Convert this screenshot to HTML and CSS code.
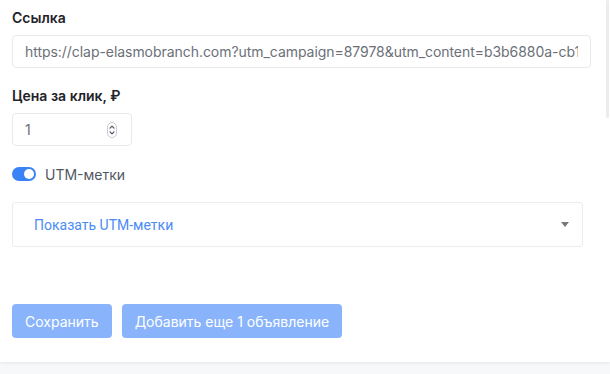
FILE: index.html
```html
<!DOCTYPE html>
<html>
  <head>
    <title>Объявление</title>
    <link rel="stylesheet" href="styles.css">
  </head>
  <body>
    <main class="card">
      <label class="field-label" for="link">Ссылка</label>
      <input
        class="text-input"
        id="link"
        type="text"
        value="https://clap-elasmobranch.com?utm_campaign=87978&amp;utm_content=b3b6880a-cb1f-4c2e-9d1a" />

      <label class="field-label price-label">Цена за клик, ₽</label>
      <div class="number-input">
        <span>1</span>
        <svg viewBox="0 0 10 16" width="10" height="16">
          <rect x="0.5" y="0.5" width="9" height="15" rx="4.5" fill="none" stroke="#c9ccd1" />
          <path d="M3 6.2 5 4.2 7 6.2" fill="none" stroke="#4b5563" stroke-width="1.2" stroke-linecap="round" stroke-linejoin="round" />
          <path d="M3 9.8 5 11.8 7 9.8" fill="none" stroke="#4b5563" stroke-width="1.2" stroke-linecap="round" stroke-linejoin="round" />
        </svg>
      </div>

      <div class="toggle">
        <span class="switch"><span class="knob"></span></span>
        UTM-метки
      </div>

      <div class="collapse">
        <span>Показать UTM-метки</span>
        <span class="caret"></span>
      </div>

      <div class="actions">
        <button disabled>Сохранить</button>
        <button disabled>Добавить еще 1 объявление</button>
      </div>
    </main>
    <div class="scroll-thumb"></div>
  </body>
</html>
```

FILE: styles.css
```css
* {
  box-sizing: border-box;
  margin: 0;
  padding: 0;
}

body {
  width: 610px;
  height: 374px;
  overflow: hidden;
  background-color: #f7f8fa;
  font-family: Inter, "Noto Sans", sans-serif;
  font-size: 14px;
  line-height: 20px;
  color: #1f2329;
}

.card {
  display: flex;
  flex-direction: column;
  align-items: flex-start;
  background-color: #fff;
  padding: 8px 27px 24px 12px;
  box-shadow: 0 1px 3px rgba(0, 0, 0, 0.08);
}

.field-label {
  font-weight: 600;
  margin-bottom: 7px;
}

.price-label {
  margin-top: 18px;
}

.text-input {
  width: 579px;
  height: 33px;
  border: 1px solid #e8e9ec;
  border-radius: 4px;
  padding: 0 12px;
  font-family: inherit;
  font-size: 14px;
  letter-spacing: -0.05px;
  color: #6b7078;
  outline: none;
}

.number-input {
  display: flex;
  align-items: center;
  justify-content: space-between;
  width: 120px;
  height: 33px;
  border: 1px solid #e8e9ec;
  border-radius: 4px;
  padding: 0 14px 0 12px;
  color: #6b7078;
}

.toggle {
  display: flex;
  align-items: center;
  gap: 9px;
  margin-top: 19px;
  color: #52575f;
}

.switch {
  display: flex;
  justify-content: flex-end;
  align-items: center;
  width: 24px;
  height: 14px;
  margin-top: -2px;
  border-radius: 7px;
  background-color: #3b82f6;
  padding: 2px;
}

.knob {
  width: 10px;
  height: 10px;
  border-radius: 50%;
  background-color: #fff;
}

.collapse {
  display: flex;
  align-items: center;
  justify-content: space-between;
  width: 571px;
  height: 45px;
  margin-top: 17px;
  border: 1px solid #ececee;
  border-radius: 3px;
  padding: 0 13px 0 21px;
  font-family: Roboto, sans-serif;
  color: #4a8cf7;
}

.caret {
  width: 0;
  height: 0;
  border-left: 4px solid transparent;
  border-right: 4px solid transparent;
  border-top: 5px solid #76787c;
}

.actions {
  display: flex;
  gap: 10px;
  margin-top: 57px;
}

button {
  height: 34px;
  padding: 0 13px;
  border: none;
  border-radius: 4px;
  background-color: #89b4fb;
  color: #fff;
  font-family: inherit;
  font-size: 14px;
}

.scroll-thumb {
  position: absolute;
  top: 0;
  right: 1px;
  width: 3px;
  height: 118px;
  border-radius: 2px;
  background-color: #ececee;
}
```
